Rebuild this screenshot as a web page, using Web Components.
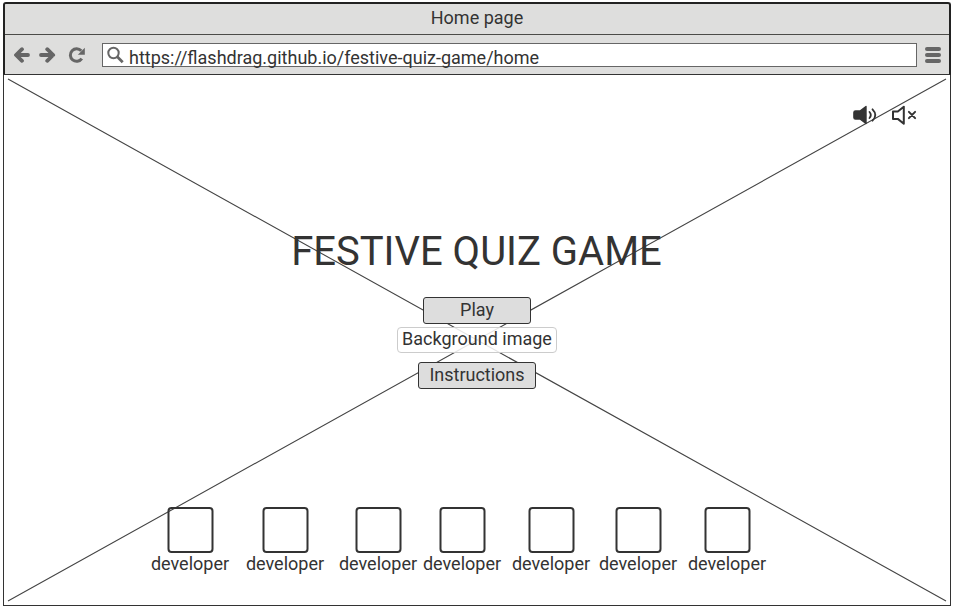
<!DOCTYPE html>
<html lang="en">
<head>
<meta charset="utf-8">
<title>Home page</title>
<style>
html,body{margin:0;height:100%;background:#fff;overflow:hidden}
body{font:18px/22px Roboto,sans-serif;color:#333}
</style>
</head>
<body>
<browser-window>
  <span slot="title">Home page</span>
  <span slot="url">https://flashdrag.github.io/festive-quiz-game/home</span>
  <quiz-home></quiz-home>
</browser-window>
<script>
const define = (name, html) => customElements.define(name, class extends HTMLElement {
  constructor() {
    super();
    this.attachShadow({mode: 'open'}).innerHTML = html;
  }
});

define('browser-window', `
<style>
:host{display:flex;flex-direction:column;box-sizing:border-box;width:948px;height:606px;margin:0 0 0 3px;padding-top:2px}
header{box-sizing:border-box;flex:none;height:73px;border:2px solid #222;border-bottom:1px solid #333;border-radius:3px 3px 0 0;background:#dededd}
.title{height:30px;line-height:28px;text-align:center;border-bottom:1px solid #4b4b48}
.bar{display:flex;align-items:center;height:39px;padding:0 8px 0 9px}
.nav{display:block;flex:none;width:88px;height:39px}
.url{box-sizing:border-box;display:flex;flex:1;height:24px;border:1px solid #666;background:#fff}
.url svg{flex:none;width:26px;height:22px}
.url div{line-height:28px;white-space:nowrap}
.menu{display:flex;flex-direction:column;gap:2px;margin-left:8px}
.menu i{width:16px;height:4px;border-radius:2px;background:#666}
main{flex:1;display:flex;box-sizing:border-box;border:1px solid #333;border-top:0}
</style>
<header>
  <div class="title"><slot name="title"></slot></div>
  <div class="bar">
    <svg class="nav" viewBox="14 35 88 39" fill="none" stroke="#666" stroke-width="3.8" stroke-linecap="round" stroke-linejoin="round">
      <path d="M28 55H16.500M22 49.200L16 55l6 5.800M41 55H53M47.200 49.200L53.200 55l-6 5.800"/>
      <path stroke-linecap="butt" stroke-width="3" d="M81.300 50.800A6.300 6.300 0 1 0 81.800 58.700"/>
      <path fill="#666" stroke="none" d="M84.800 47.800v7H77.800z"/>
    </svg>
    <div class="url">
      <svg viewBox="103 44 26 22" fill="none" stroke="#666"><circle cx="113.500" cy="53" r="5.200" stroke-width="2"/><path d="M117.300 56.800l5.400 5.400" stroke-width="2.800"/></svg>
      <div><slot name="url"></slot></div>
    </div>
    <div class="menu"><i></i><i></i><i></i></div>
  </div>
</header>
<main><slot></slot></main>`);

define('wire-button', `
<style>
:host{display:block;box-sizing:border-box;height:27px;line-height:24px;text-align:center;border:1px solid #333;border-radius:3px;background:#ddd}
</style><slot></slot>`);

define('dev-card', `
<style>
:host{display:flex;flex-direction:column;align-items:center;width:78px}
svg{display:block;width:48px;height:46px}
span{line-height:22px}
</style><svg viewBox="0 0 48 46"><rect x="2.500" y="1" width="44" height="44" rx="3" fill="none" stroke="#333" stroke-width="2"/></svg><span><slot></slot></span>`);

define('sound-controls', `
<style>:host{display:flex;justify-content:flex-end}svg{width:80px;height:34px}</style>
<svg viewBox="845 98 80 34" fill="none" stroke="#333" stroke-linecap="round" stroke-linejoin="round">
  <path fill="#333" stroke-width="1.400" d="M855.500 111h4.500l6-4.500v17l-6-4.500H855.500q-1.600 0-1.600-1.600v-4.800q0-1.600 1.600-1.600z"/>
  <path stroke-width="1.800" d="M869.500 112q2.600 3 0 6M872.500 109.300q5.600 5.700 0 11.400"/>
  <path stroke-width="2" d="M893 111.500h4.800l6-4.800v17l-6-4.800H893zM908.900 111.900l6.200 6.200M915.100 111.900l-6.200 6.200"/>
</svg>`);

define('quiz-home', `
<style>
:host{position:relative;display:flex;flex:1;flex-direction:column;align-items:center}
.cross{position:absolute;left:0;top:0;width:946px;height:530px}
sound-controls{position:relative;align-self:stretch;padding:23px 25px 0 0}
h1{position:relative;margin:98px 1px 0 0;font-size:40px;font-weight:400;line-height:44px;height:67px}
.play{position:relative;width:108px}
.note{position:relative;box-sizing:border-box;width:160px;height:26px;margin:3px 0 9px;line-height:22px;text-align:center;border:1px solid #ccc;border-radius:4px;background:rgba(255,255,255,.86)}
.info{position:relative;width:118px}
.team{position:relative;display:flex;align-self:flex-start;margin:118px 0 0 147px}
</style>
<svg class="cross" viewBox="4 75 946 530" stroke="#444" stroke-width="1.100"><path d="M8 79L946 601M946 79L8 601"/></svg>
<sound-controls></sound-controls>
<h1>FESTIVE QUIZ GAME</h1>
<wire-button class="play">Play</wire-button>
<div class="note">Background image</div>
<wire-button class="info">Instructions</wire-button>
<div class="team">
  <dev-card>developer</dev-card>
  <dev-card style="margin-left:17px">developer</dev-card>
  <dev-card style="margin-left:15px">developer</dev-card>
  <dev-card style="margin-left:6px">developer</dev-card>
  <dev-card style="margin-left:11px">developer</dev-card>
  <dev-card style="margin-left:9px">developer</dev-card>
  <dev-card style="margin-left:11px">developer</dev-card>
</div>`);
</script>
</body>
</html>
